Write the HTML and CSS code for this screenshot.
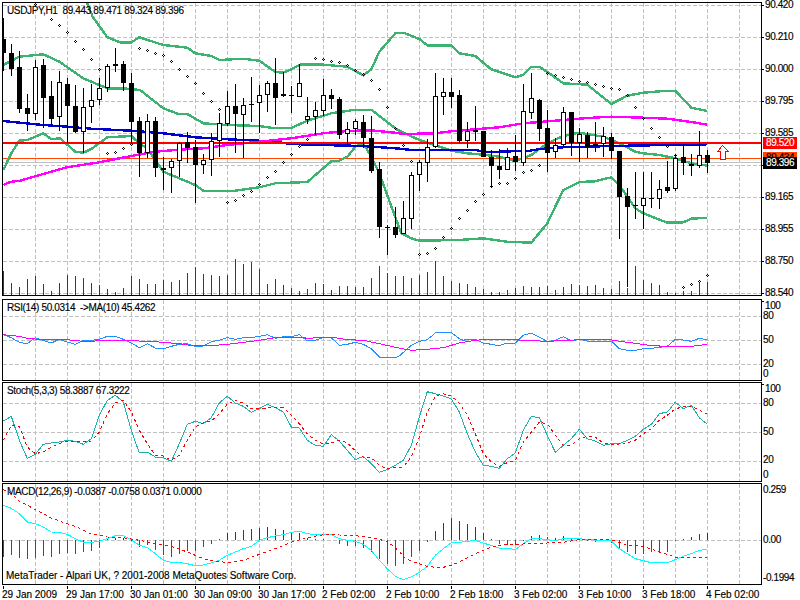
FILE: index.html
```html
<!DOCTYPE html>
<html lang="en">
<head>
<meta charset="utf-8">
<title>USDJPY,H1</title>
<link rel="stylesheet" href="styles.css">
</head>
<body>
<main class="chart">
  <section class="pane">
    <div class="plot plot-price">
      <svg id="price" class="canvas" viewBox="3 3 758 292" width="758" height="292"></svg>
      <p class="legend">USDJPY,H1&nbsp; 89.443 89.471 89.324 89.396</p>
    </div>
    <div class="scale scale-price">
      <div class="ticks">
        <span class="tick">90.420</span><span class="tick">90.210</span><span class="tick">90.000</span><span class="tick">89.795</span><span class="tick">89.585</span><span class="tick">89.374</span><span class="tick">89.165</span><span class="tick">88.955</span><span class="tick">88.750</span><span class="tick">88.540</span>
      </div>
      <span class="tag tag-red">89.520</span>
      <span class="tag tag-orange">89.434</span>
      <span class="tag tag-black">89.396</span>
    </div>
  </section>
  <section class="pane">
    <div class="plot plot-rsi">
      <svg id="rsi" class="canvas" viewBox="3 298 758 80" width="758" height="80"></svg>
      <p class="legend">RSI(14) 50.0314 &nbsp;-&gt;MA(10) 45.4262</p>
    </div>
    <div class="scale rows rows-rsi">
      <span class="tick wide">100</span><span class="tick">80</span><span class="tick">50</span><span class="tick">20</span><span class="tick">0</span>
    </div>
  </section>
  <section class="pane">
    <div class="plot plot-stoch">
      <svg id="stoch" class="canvas" viewBox="3 381 758 98" width="758" height="98"></svg>
      <p class="legend">Stoch(5,3,3) 58.3887 67.3222</p>
    </div>
    <div class="scale rows rows-stoch">
      <span class="tick wide">100</span><span class="tick">80</span><span class="tick">50</span><span class="tick">20</span><span class="tick">0</span>
    </div>
  </section>
  <section class="pane">
    <div class="plot plot-macd">
      <svg id="macd" class="canvas" viewBox="3 482 758 100" width="758" height="100"></svg>
      <p class="legend">MACD(12,26,9) -0.0387 -0.0758 0.0371 0.0000</p>
      <p class="copyright">MetaTrader - Alpari UK, ? 2001-2008 MetaQuotes Software Corp.</p>
    </div>
    <div class="scale rows rows-macd">
      <span class="tick">0.259</span><span class="tick">0.00</span><span class="tick">-0.1994</span>
    </div>
  </section>
  <footer class="times">
    <span class="time">29 Jan 2009</span><span class="time">29 Jan 17:00</span><span class="time">30 Jan 01:00</span><span class="time">30 Jan 09:00</span><span class="time">30 Jan 17:00</span><span class="time">2 Feb 02:00</span><span class="time">2 Feb 10:00</span><span class="time">2 Feb 18:00</span><span class="time">3 Feb 02:00</span><span class="time">3 Feb 10:00</span><span class="time">3 Feb 18:00</span><span class="time">4 Feb 02:00</span>
  </footer>
</main>
<script src="chart.js"></script>
</body>
</html>
```
FILE: styles.css
```css
* { box-sizing: content-box; }
html, body { margin: 0; padding: 0; background: #fff; }
body {
  width: 800px;
  height: 600px;
  overflow: hidden;
  font-family: "Liberation Sans", Arial, sans-serif;
  font-size: 10px;
  -webkit-text-stroke: 0.15px currentColor;
  color: #000;
}
.chart { padding: 2px 0 0 2px; }
.pane { display: flex; margin-bottom: 1px; }
.plot { position: relative; width: 758px; border: 1px solid #000; overflow: hidden; }
.plot-price { height: 292px; }
.plot-rsi { height: 80px; }
.plot-stoch { height: 98px; }
.plot-macd { height: 100px; }
.canvas { display: block; shape-rendering: crispEdges; }
.legend, .copyright { position: absolute; margin: 0; line-height: 12px; white-space: nowrap; }
.legend { left: 4px; top: 2px; letter-spacing: -0.35px; }
.copyright { left: 3px; bottom: 2px; }

.scale { position: relative; width: 38px; line-height: 10px; letter-spacing: -0.4px; }
.ticks { display: flex; flex-direction: column; gap: 22px; margin-top: -2px; }
.tick { position: relative; display: block; height: 10px; padding-left: 3px; white-space: nowrap; }
.tick::before { content: ""; position: absolute; left: 0; top: 5px; width: 2px; height: 1px; background: #000; }
.rows { display: grid; padding-top: 2px; align-content: start; }
.rows .tick { height: auto; padding-left: 1px; }
.rows .tick::before { content: none; }
.rows .wide { padding-left: 3px; }
.rows .wide::before { content: ""; top: 0; }
.rows-rsi { grid-template-rows: 10px 24px 24px 10px 10px; }
.rows-stoch { grid-template-rows: 14px 29px 28px 15px 10px; }
.rows-macd { grid-template-rows: 50px 38px 10px; }
.tag { position: absolute; left: 1px; width: 31px; height: 12px; padding-left: 3px; line-height: 12px; color: #fff; }
.tag-red { top: 135px; background: #f00; }
.tag-orange { top: 150px; background: #ff4500; color: #000; }
.tag-black { top: 155px; background: #000; }

.times { display: flex; line-height: 12px; }
.time { position: relative; flex: 0 0 64px; padding-top: 3px; white-space: nowrap; }
.time::before { content: ""; position: absolute; left: 1px; top: 0; width: 1px; height: 3px; background: #000; }
```
FILE: chart.js
```js
var NS = 'http://www.w3.org/2000/svg';
function el(svg, name, attrs) {
  var n = document.createElementNS(NS, name);
  for (var k in attrs) n.setAttribute(k, attrs[k]);
  svg.appendChild(n);
  return n;
}
// Readings are kept in 3x coordinates: a = left half, b = right half (x + 1200), off = y shift.
function pts(a, b, off) {
  var out = [], i;
  for (i = 0; i < a.length; i += 2) out.push((a[i] / 3).toFixed(1) + ',' + ((a[i + 1] + off) / 3).toFixed(1));
  for (i = 0; i < b.length; i += 2) out.push(((b[i] + 1200) / 3).toFixed(1) + ',' + ((b[i + 1] + off) / 3).toFixed(1));
  return out.join(' ');
}
function line(svg, p, color, width, dash) {
  var a = { points: p, fill: 'none', stroke: color, 'stroke-width': width };
  if (dash) a['stroke-dasharray'] = dash;
  el(svg, 'polyline', a);
}
function seg(svg, x1, y1, x2, y2, color, dash, w) {
  var a = { x1: x1, y1: y1, x2: x2, y2: y2, stroke: color, 'stroke-width': w || 1 };
  if (dash) a['stroke-dasharray'] = dash;
  el(svg, 'line', a);
}
var GRID = '#c0c0c0', DASH = '4 2';
function grid(svg, top, bottom, rows) {
  for (var x = 35; x <= 739; x += 32) seg(svg, x + 0.5, top, x + 0.5, bottom, GRID, DASH);
  rows.forEach(function (y) { seg(svg, 3, y + 0.5, 761, y + 0.5, GRID, DASH); });
}

/* ---------- price pane ---------- */
var price = document.getElementById('price');
grid(price, 3, 295, [5, 37, 69, 101, 133, 165, 197, 229, 261, 293]);

seg(price, 3, 162.5, 761, 162.5, '#c0c0c0');
seg(price, 3, 158.5, 761, 158.5, '#ff4500');

var GREEN = '#3cb371', THICK = 2.4;
line(price, pts([258,0,278,50,322,112,360,127,394,127,418,112,490,135,562,143,586,160,634,168,658,180,730,176,778,182,826,216,850,218,874,208,900,194,970,194,1042,200,1090,226,1114,208,1138,155,1186,100,1200,98],
  [10,98,58,117,82,136,154,136,178,160,226,168,274,208,346,232,370,224,394,200,418,200,442,216,490,250,562,254,634,312,682,287,730,278,802,272,826,272,874,323,922,333], 0), GREEN, THICK);
line(price, pts([10,195,58,170,130,163,178,185,250,235,322,265,370,265,420,270,490,325,538,343,562,342,610,370,682,375,778,378,826,385,874,384,922,362,994,340,1066,329,1114,329,1186,385,1200,395],
  [0,393,58,420,82,428,154,452,202,460,250,464,298,470,322,478,346,483,394,465,442,430,490,408,538,398,610,410,658,430,706,455,730,460,778,465,826,475,874,490,922,497], 0), GREEN, THICK);
line(price, pts([10,510,34,460,58,422,82,420,130,400,154,418,180,415,226,455,250,458,274,447,322,412,394,408,418,430,442,445,466,480,490,515,538,535,586,555,610,572,706,572,778,562,826,550,922,546,994,484,1018,482,1042,470,1066,440,1090,430,1114,470,1138,520,1200,690],
  [5,700,34,715,58,722,178,720,250,715,322,725,394,728,442,670,490,570,538,546,586,544,634,532,658,555,706,625,730,640,802,668,850,667,874,656,922,653], 0), GREEN, THICK);

line(price, pts([10,363,130,375,202,380,274,386,394,392,490,400,586,412,682,418,778,422,826,425,874,432,1000,436,1090,438,1200,446],
  [34,450,226,450,250,455,298,455,390,452,420,447,490,442,634,438,922,433], 0), '#0000cd', THICK);
line(price, pts([10,555,30,546,60,542,130,522,200,502,298,487,394,468,466,455,538,449,610,445,682,435,778,425,874,415,970,400,1040,393,1114,391,1186,398],
  [10,402,106,400,154,394,298,382,370,370,466,362,562,354,634,350,730,353,802,356,874,366,922,374], 0), '#ff00ff', THICK);
seg(price, 3, 143, 761, 143, '#f00', null, 2);

// volume
[813,850,861,837,828,852,873,849,825,828,834,849,855,867,876,864,828,837,852,852,840,846,840,819,801,822,825,828,825,778,792,786,807,852,837,855,864,873,867,849,852,870,858,858,861,861,834,798,818,828,828,834,825,816,783,828,843,849,852,861,867,876,876,870,864,858,861,861,858,870,861,852,855,858,855,864,867,843,864,798,840,849,855,876,879,873,873,849,846]
  .forEach(function (t, k) {
    var x = 3.5 + 8 * k;
    seg(price, x, Math.round(t / 3), x, 295, '#006400');
  });

// candles: wick top, wick bottom, body top, body bottom, 1 = white
var C = [
[55,212,118,158,0],[132,228,160,207,0],[153,340,202,326,0],[282,392,325,341,0],[180,360,202,341,1],[178,385,196,293,0],[242,380,289,356,0],[213,392,247,352,1],[235,430,252,317,0],[255,400,319,395,0],
[265,460,322,395,1],[252,370,301,322,1],[235,315,265,301,1],[192,275,199,265,1],[145,215,193,199,1],[183,272,193,250,0],[220,430,250,365,0],[350,532,364,458,0],[342,473,364,458,1],[350,530,364,505,0],
[470,570,505,510,0],[478,580,482,505,1],[425,532,428,482,1],[395,488,427,444,0],[420,608,442,494,0],[462,522,481,496,1],[400,527,422,481,1],[340,470,368,422,1],[272,378,319,372,1],[252,458,319,341,0],
[295,475,316,346,1],[232,365,313,313,0],[255,398,284,310,1],[242,335,250,286,1],[175,375,250,293,0],[216,292,283,289,1],[258,340,286,286,0],[193,290,250,292,1],[292,372,349,361,1],[306,405,331,352,1],
[238,348,286,334,1],[267,326,286,296,0],[290,416,298,404,0],[367,435,388,403,1],[357,405,364,386,1],[345,443,367,413,0],[348,518,414,513,0],[487,713,508,680,0],[675,765,680,680,0],[622,714,681,704,0],
[603,687,655,701,1],[516,687,526,658,1],[480,572,487,526,1],[418,545,442,490,1],[219,443,289,442,1],[234,344,277,292,1],[234,323,277,290,0],[270,430,286,422,0],[366,443,392,422,1],[318,424,391,395,0],
[393,470,394,470,0],[450,563,472,499,0],[446,538,499,511,0],[445,510,472,509,1],[405,512,469,487,0],[252,497,334,490,1],[219,358,295,340,1],[298,422,301,386,0],[331,515,385,458,0],[415,475,436,457,1],
[322,440,337,436,1],[335,468,337,428,0],[385,486,403,430,1],[396,475,406,441,0],[367,455,431,437,1],[381,472,409,433,1],[400,477,411,452,0],[453,716,453,592,0],[565,862,589,620,0],[515,656,616,616,0],
[515,686,595,619,1],[515,625,593,596,0],[540,628,568,598,1],[483,578,562,572,0],[465,572,475,568,1],[431,524,472,490,0],[462,527,491,499,0],[394,505,466,499,1],[451,520,466,488,0]
];
C.forEach(function (c, k) {
  var x = 3 + 8 * k, wt = Math.round(c[0] / 3), wb = Math.round(c[1] / 3), bt = Math.round(c[2] / 3), bb = Math.round(c[3] / 3);
  seg(price, x + 0.5, wt, x + 0.5, wb, '#000');
  if (bb === bt) {
    seg(price, x - 2, bt + 0.5, x + 3, bt + 0.5, '#000');
  } else if (c[4]) {
    el(price, 'rect', { x: x - 1.5, y: bt + 0.5, width: 4, height: bb - bt - 1, fill: '#fff', stroke: '#000', 'stroke-width': 1 });
  } else {
    el(price, 'rect', { x: x - 2, y: bt, width: 5, height: bb - bt, fill: '#000' });
  }
});

// parabolic SAR
var sar = [106,12,154,58,178,76,202,97,226,124,250,148,274,178,298,208,322,460,346,457,370,445,394,432,418,145,442,151,466,160,490,166,514,184,538,208,562,229,586,250,610,280,634,304,658,328,682,607,706,601,730,586,754,574,778,553,802,532,826,514,850,487,874,463,898,439,922,418,946,175,970,178,994,184,1018,187,1042,196,1066,211,1090,223,1114,241,1138,268,1162,322,1186,386,1210,436,1234,484,1258,763,1282,760,1306,745,1330,712,1354,685,1378,655,1402,631,1426,604,1450,583,1474,559,1498,550,1522,550,1546,535,1570,517,1594,511,1618,496,1642,220,1666,226,1690,232,1714,238,1738,244,1762,247,1786,253,1810,259,1834,265,1858,268,1882,287,1906,322,1930,355,1954,385,1978,412,2002,439,2026,466,2050,862,2074,853,2098,844,2122,826];
var d = '';
for (var i = 0; i < sar.length; i += 2) {
  var sx = Math.floor(sar[i] / 3), sy = Math.floor(sar[i + 1] / 3);
  d += 'M' + sx + ' ' + (sy - 1) + 'h1v1h-1zM' + (sx - 1) + ' ' + sy + 'h1v1h-1zM' + (sx + 1) + ' ' + sy + 'h1v1h-1zM' + sx + ' ' + (sy + 1) + 'h1v1h-1z';
}
el(price, 'path', { d: d, fill: '#000' });

// up arrow
el(price, 'polygon', { points: '722.5,145.5 728.5,151.5 725.5,151.5 725.5,159.5 720.5,159.5 720.5,151.5 717.5,151.5', fill: '#fff', stroke: '#f00', 'stroke-width': 1 });

/* ---------- RSI ---------- */
var rsi = document.getElementById('rsi');
grid(rsi, 298, 378, [314, 338, 362]);
line(rsi, pts([10,113,34,122,58,136,82,140,106,122,130,130,154,138,178,127,202,135,226,142,250,130,274,130,298,127,322,118,346,118,370,127,394,138,418,152,442,140,466,153,490,155,514,148,538,142,562,140,586,148,610,147,634,134,658,130,682,122,706,127,730,122,754,122,778,118,802,113,826,124,850,119,874,119,898,113,922,132,946,130,970,122,994,122,1018,145,1042,142,1066,136,1090,142,1114,155,1138,180,1162,182,1186,183],
  [0,175,34,145,58,133,82,128,106,108,130,106,154,107,178,125,190,130,202,127,226,127,250,138,274,142,298,146,322,138,346,138,370,115,394,108,418,120,442,134,466,130,490,119,514,132,538,127,562,132,586,132,610,132,634,132,658,155,682,160,706,160,730,155,754,154,802,148,826,127,850,129,874,133,898,124,922,128], 885), '#1e90ff', 1);
line(rsi, pts([10,113,58,118,82,124,130,128,202,128,250,133,370,130,466,134,538,140,586,147,634,146,682,142,778,130,826,122,898,120,922,124,994,120,1042,128,1090,130,1138,140,1200,154],
  [34,160,82,157,130,152,178,138,226,130,250,128,346,128,370,130,442,133,514,130,538,127,622,127,658,133,706,139,754,146,802,148,874,148,922,142], 885), '#ff00ff', 1);

/* ---------- Stochastic ---------- */
var stoch = document.getElementById('stoch');
grid(stoch, 381, 479, [401, 430, 459]);
line(stoch, pts([10,372,34,358,58,430,82,484,106,472,130,442,154,438,178,435,202,430,226,433,250,442,274,425,298,355,322,310,346,295,370,315,394,400,418,468,442,465,466,480,490,482,514,493,538,440,562,382,586,373,610,380,634,362,658,318,682,298,706,318,730,328,754,346,778,335,802,322,826,332,850,345,874,390,898,393,922,430,946,445,970,448,994,413,1018,432,1042,460,1066,488,1090,478,1114,500,1138,526,1162,518,1186,505],
  [10,490,34,445,58,360,82,284,106,290,130,297,154,306,178,345,202,410,226,465,250,505,274,508,298,514,322,485,346,468,370,400,394,358,418,362,442,415,466,466,490,445,514,425,538,397,562,425,586,432,610,445,634,440,658,440,682,430,706,418,730,397,754,382,778,350,802,345,826,316,850,335,874,325,898,362,922,382], 885), '#20b2aa', 1);
line(stoch, pts([10,430,34,385,58,388,82,450,106,470,130,465,154,450,178,440,202,432,226,434,250,435,274,432,298,405,322,350,346,318,370,310,394,345,418,400,442,440,466,475,490,477,514,490,538,475,562,430,586,390,610,378,634,372,658,350,682,322,706,310,730,318,754,335,778,335,802,333,826,330,850,332,874,355,898,380,922,410,946,430,970,442,994,437,1018,430,1042,437,1066,462,1090,480,1114,482,1138,505,1162,515,1186,512],
  [10,510,34,480,58,420,82,345,106,298,130,290,154,297,178,318,202,355,226,410,250,470,274,495,298,508,322,497,346,490,370,435,394,405,418,376,442,380,466,415,490,445,514,445,538,425,562,418,586,420,610,438,634,441,658,441,682,437,706,430,730,410,754,395,778,370,802,355,826,335,850,330,874,327,898,340,922,352], 885), '#f00', 1, '3 3');

/* ---------- MACD ---------- */
var macd = document.getElementById('macd');
grid(macd, 482, 582, [538]);
[780,773,783,786,783,776,780,771,768,770,765,763,752,722,722,722,731,750,745,760,775,780,770,762,762,750,740,726,708,705,699,697,693,690,696,700,705,708,724,726,726,730,742,748,748,752,765,785,800,808,800,780,762,735,702,678,663,672,681,690,707,726,740,745,745,733,716,714,720,723,717,722,726,732,735,733,738,752,765,770,770,765,765,765,732,726,720,712,707]
  .forEach(function (v, k) {
    var x = 3.5 + 8 * k, y = Math.round((v + 885) / 3);
    seg(macd, x, 538, x, y, v > 730 ? '#f00' : '#006400');
  });
line(macd, pts([10,625,34,634,58,650,82,675,106,680,130,690,154,705,178,706,202,712,226,725,250,736,274,736,298,733,322,725,346,716,370,716,394,728,418,745,442,752,466,770,490,790,514,796,538,796,562,800,586,806,610,804,634,798,658,790,682,775,706,765,730,755,754,748,778,730,802,722,826,717,850,713,874,706,898,703,922,710,946,713,970,713,994,713,1018,725,1042,730,1066,733,1090,742,1114,760,1138,790,1162,815,1186,838],
  [10,848,34,840,58,826,82,808,106,775,130,755,154,737,178,736,226,730,250,738,298,753,322,753,346,758,370,740,394,725,418,725,466,731,490,725,538,725,562,728,634,731,658,755,706,785,754,797,802,797,826,788,850,778,874,770,898,760,922,757], 885), '#00ffff', 1);
line(macd, pts([10,578,34,590,58,612,82,625,130,650,154,663,178,672,226,688,274,712,298,715,322,720,370,722,418,730,466,740,514,748,562,765,586,775,610,785,634,790,682,797,730,790,778,772,826,755,874,736,922,722,970,713,1018,714,1066,716,1114,722,1162,733,1200,765],
  [10,780,34,792,58,800,82,808,106,811,130,811,154,805,178,795,226,770,274,750,298,745,346,742,394,740,442,738,490,736,538,728,610,728,634,728,682,745,730,748,778,765,802,772,826,780,874,783,922,782], 885), '#f00', 1, '3 3');
```
